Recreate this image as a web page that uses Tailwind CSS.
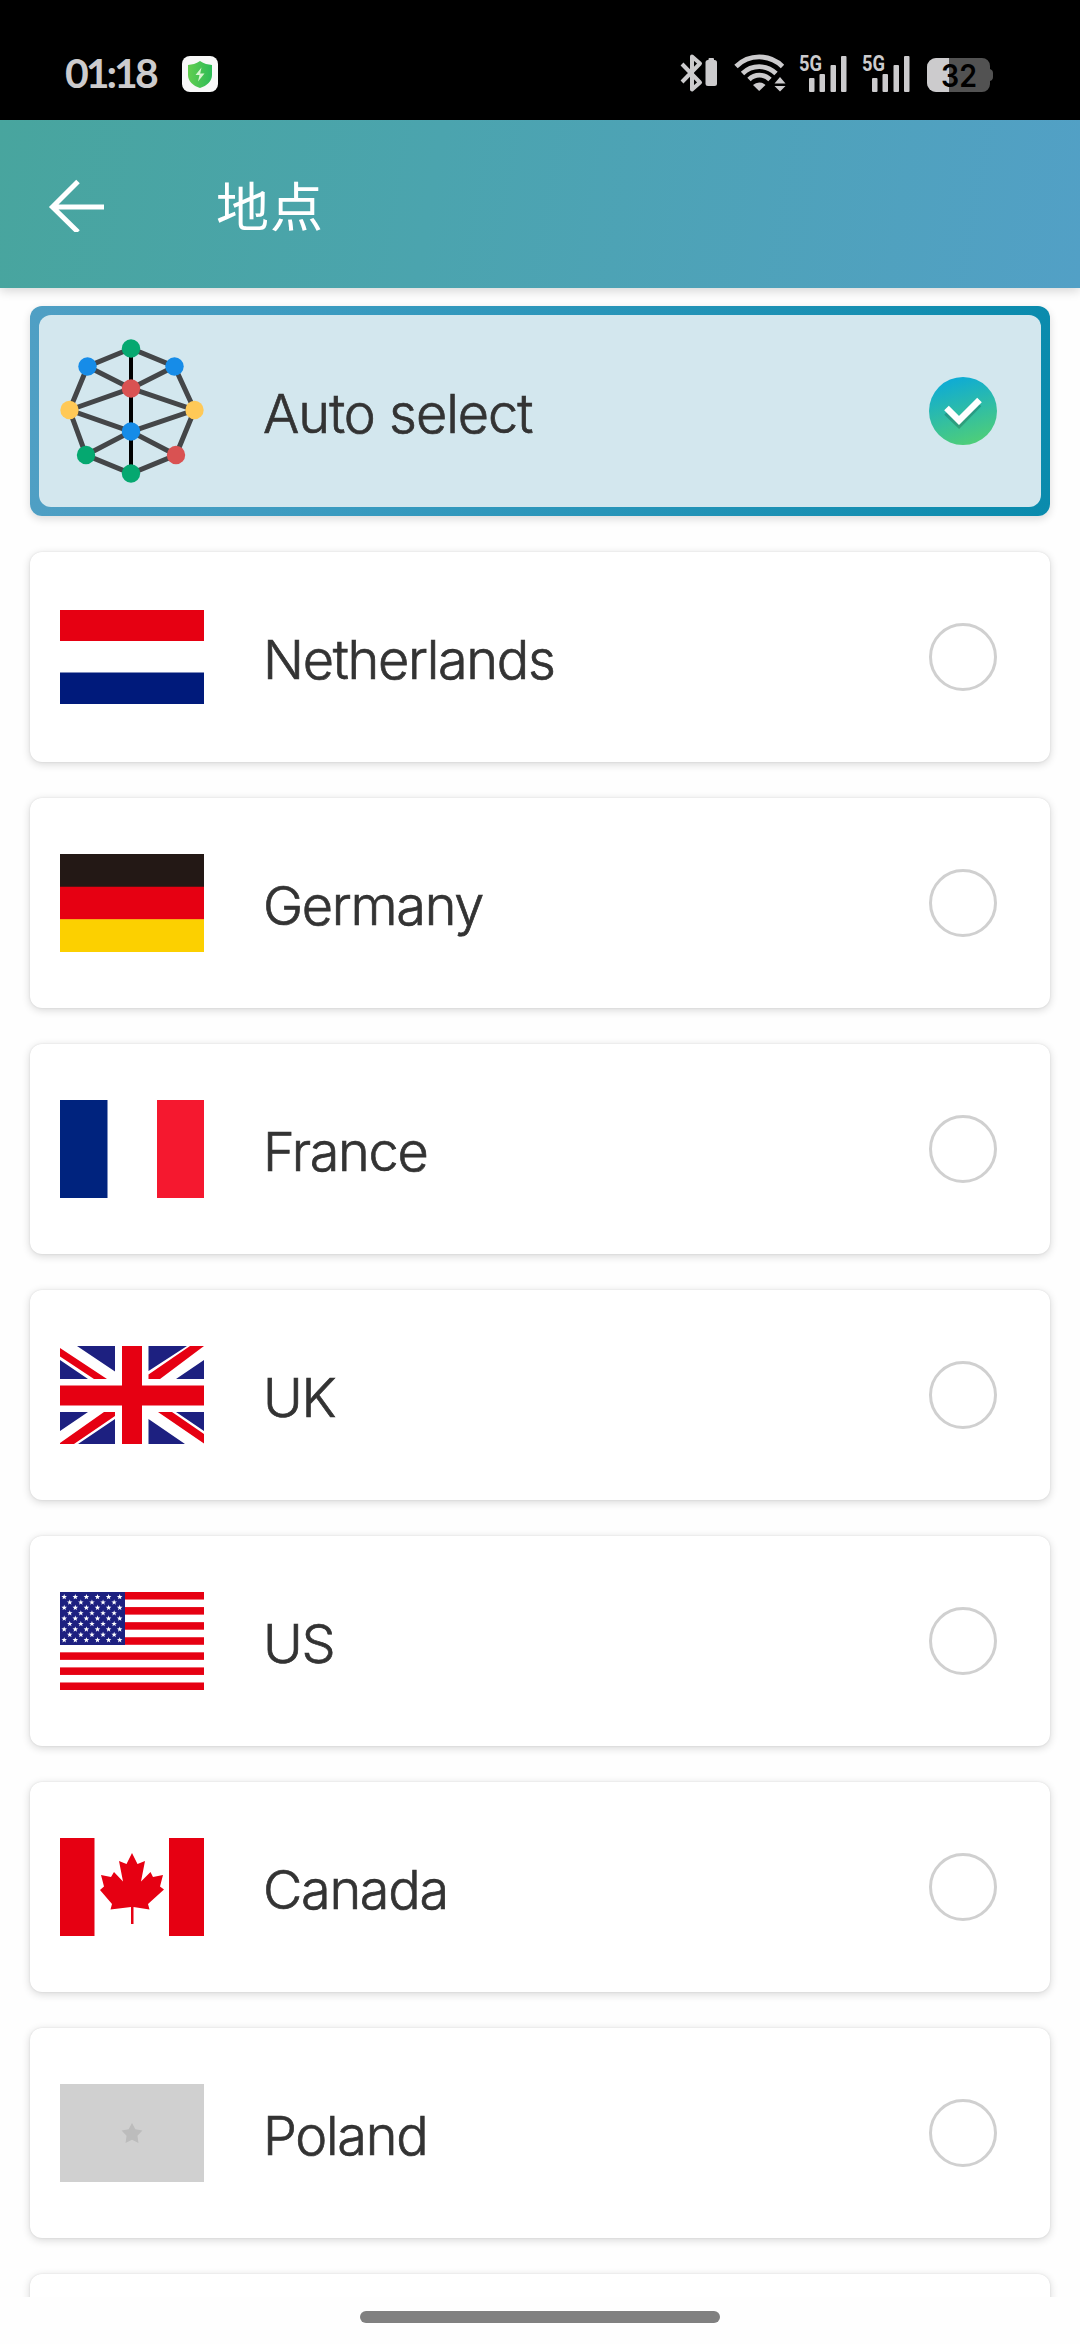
<!DOCTYPE html>
<html lang="zh">
<head>
<meta charset="utf-8">
<title>地点</title>
<script src="https://cdn.jsdelivr.net/npm/@tailwindcss/browser@4"></script>
</head>
<body class="w-[1080px] h-[2344px] overflow-hidden bg-[#fefefe] font-['Inter',sans-serif] flex flex-col">
  <div class="h-[120px] shrink-0 bg-black text-[#cccbcd] flex items-center pl-[65px] pr-[86px] pt-[28px]">
    <span class="font-['Lato'] font-bold text-[41px] leading-[40px] w-[92px] mb-[2px] tracking-[-3px] whitespace-nowrap">01:18</span>
    <svg class="ml-[25px]" width="36" height="36" viewBox="0 0 36 36"><defs><linearGradient id="sh"><stop offset="0" stop-color="#62ce50"/><stop offset="1" stop-color="#2dbb57"/></linearGradient></defs><rect width="36" height="36" rx="8" fill="#f8f8f8"/><path d="M18 5c4 3 8 3.500 12 4v10c0 6-5 11-12 13C11 30 6 25 6 19V9c4-.5 8-1 12-4z" fill="url(#sh)"/><path d="M19.500 11.500l-6 7.500h4l-1.500 6.500 6.500-8h-4.300z" fill="#d8f5d0"/></svg>
    <svg class="ml-auto" width="314" height="58" viewBox="0 -10 314 58" fill="#cccbcd">
      <path d="M2 9.500L20 28 12 35V2l8 7L2 27.500" fill="none" stroke="#cccbcd" stroke-width="4" stroke-linejoin="round" transform="translate(0,-.5)"/>
      <rect x="25.500" y="5" width="11.500" height="26" rx="2.500"/><rect x="28.500" y="3" width="5.500" height="4" rx="1"/>
      <g transform="translate(0,-1)"><g fill="none" stroke="#cccbcd" stroke-width="4.800"><path d="M56 12.500a33 33 0 0 1 46.500 0"/><path d="M62.500 19.500a24 24 0 0 1 33.500 0"/><path d="M69 25.500a15 15 0 0 1 21 0"/></g>
      <path d="M73 31a9 9 0 0 1 12.500 0L79.200 37z"/>
      <path d="M94.500 29.500h11l-5.500-6.500zM94.500 32h11l-5.500 5.500z"/></g>
      <g transform="translate(0,-1)"><rect x="129" y="24" width="5.500" height="14" rx="1"/><rect x="139.500" y="20" width="5.500" height="18" rx="1"/><rect x="150.500" y="11" width="5.500" height="27" rx="1"/><rect x="161" y="2" width="5.500" height="36" rx="1"/></g>
      <g transform="translate(63,-1)"><rect x="129" y="24" width="5.500" height="14" rx="1"/><rect x="139.500" y="20" width="5.500" height="18" rx="1"/><rect x="150.500" y="11" width="5.500" height="27" rx="1"/><rect x="161" y="2" width="5.500" height="36" rx="1"/></g>
      <text x="119" y="16" class="font-['Roboto'] font-bold text-[22px]" textLength="23" lengthAdjust="spacingAndGlyphs">5G</text>
      <text x="182" y="16" class="font-['Roboto'] font-bold text-[22px]" textLength="23" lengthAdjust="spacingAndGlyphs">5G</text>
      <g transform="translate(0,-1)"><path d="M256 4h46a8 8 0 0 1 8 8v3q3 1 3 4v4q0 3-3 4v3a8 8 0 0 1-8 8h-46a9 9 0 0 1-9-9V13a9 9 0 0 1 9-9z" fill="#525252"/>
      <path d="M269 4h-13a9 9 0 0 0-9 9v16a9 9 0 0 0 9 9h13z"/>
      <text x="261" y="32.500" fill="#000" class="font-['Inter'] font-semibold text-[31px]" textLength="36" lengthAdjust="spacingAndGlyphs">32</text></g>
    </svg>
  </div>
  <header class="h-[168px] shrink-0 bg-[linear-gradient(100deg,#48a59e,#4ba4ae_40%,#52a0c6)] flex items-center relative shadow-[0_3px_10px_rgba(0,0,0,0.16)]">
    <svg class="ml-[48px]" width="58" height="56" viewBox="0 0 58 56" fill="none" stroke="#fff" stroke-width="5"><path d="M56 31H4M30 5.500L4.500 31 30 56"/></svg>
    <h1 class="ml-[110px] mb-[1px] text-white text-[53px] leading-[60px] tracking-[1px] font-['Noto_Sans_CJK_SC',sans-serif]">地点</h1>
  </header>
  <main class="h-[2009px] shrink-0 overflow-hidden px-[30px] pt-[18px]">
    <div id="list" class="flex flex-col gap-[36px] text-[54px] leading-[64px] text-[#333] [-webkit-text-stroke:0.7px_#333]">
      <div class="h-[210px] shrink-0 rounded-[12px] p-[9px] bg-[linear-gradient(90deg,#4f9fc4,#3a9bc0_30%,#0a8bad)] shadow-[0_3px_8px_rgba(0,0,0,0.14)]">
        <div class="h-[192px] rounded-[12px] bg-[#d3e7ee] flex items-center pl-[21px] pr-[43px]">
          <svg width="144" height="154" viewBox="0 0 144 154"><g stroke="#444648" stroke-width="5" fill="none"><path d="M71 14.500L27.500 32.500 9.500 76 26 121 71 139.500 116 121 134.500 76 114.500 32.500zM27.500 32.500L71 54.500 114.500 32.500M9.500 76L71 54.500 134.500 76 71 97.500zM26 121L71 97.500 116 121"/><path d="M71 14v126" stroke="#000" stroke-width="4"/></g><g fill="#05a870"><circle cx="71" cy="14.500" r="9.200"/><circle cx="26" cy="121" r="9.200"/><circle cx="71" cy="139.500" r="9.200"/></g><g fill="#168ce8"><circle cx="27.500" cy="32.500" r="9.200"/><circle cx="114.500" cy="32.500" r="9.200"/><circle cx="71" cy="97.500" r="9.200"/></g><g fill="#d95252"><circle cx="71" cy="54.500" r="9.200"/><circle cx="116" cy="121" r="9.200"/></g><g fill="#ffc957"><circle cx="9.500" cy="76" r="9.200"/><circle cx="134.500" cy="76" r="9.200"/></g></svg>
          <span class="ml-[59px] mt-[6px] font-light tracking-[-1px]">Auto select</span>
          <svg class="ml-auto" width="70" height="70" viewBox="0 0 70 70"><defs><linearGradient id="ok" x1=".3" y1="0" x2=".6" y2="1"><stop offset="0" stop-color="#0caad8"/><stop offset="1" stop-color="#4fce78"/></linearGradient></defs><circle cx="35" cy="35" r="34" fill="url(#ok)"/><path d="M18.500 34.500L31 46.500 51 26" transform="translate(0,2)" stroke="#000" stroke-opacity=".18" stroke-width="6.500" fill="none"/><path d="M18.500 32L31 44.500 51.500 24" stroke="#fff" stroke-width="6.500" fill="none"/></svg>
        </div>
      </div>
    </div>
  </main>
  <footer class="grow flex justify-center pt-[14px]"><div class="w-[360px] h-[12px] rounded-full bg-[#808080]"></div></footer>
<script>
const star = (cx, cy, r, k = .42) => { let p = []; for (let i = 0; i < 10; i++) { const a = -Math.PI/2 + i*Math.PI/5, q = i%2 ? r*k : r; p.push((cx+q*Math.cos(a)).toFixed(2)+','+(cy+q*Math.sin(a)).toFixed(2)); } return `<polygon points="${p.join(' ')}"/>`; };
let us = '';
for (let i = 0; i < 7; i++) us += `<rect y="${i*15.08}" width="144" height="7.540" fill="#e60012"/>`;
us += '<rect width="65" height="53" fill="#1d2080"/><g fill="#fff">';
for (let r = 0; r < 9; r++) for (let c = 0; c < (r%2 ? 5 : 6); c++) us += star(4.200 + (r%2 ? 5.550 : 0) + c*11.100, 5 + r*5.380, 2.900);
us += '</g>';
const flags = [
 ['Netherlands', '<path fill="#e60012" d="M0 2h144v31H0z"/><path fill="#001a7b" d="M0 64.500h144V96H0z"/>'],
 ['Germany', '<path fill="#231815" d="M0 0h144v33H0z"/><path fill="#e60012" d="M0 32.700h144v33H0z"/><path fill="#fcd000" d="M0 65.300h144V98H0z"/>'],
 ['France', '<path fill="#00237e" d="M0 0h47.500v98H0z"/><path fill="#f5182f" d="M97 0h47v98H97z"/>'],
 ['UK', '<path fill="#1d2080" d="M17 0h38v25.500zM88.500 0h38.500L88.500 25zM144 14v19h-28zM0 14l28 19H0zM0 66h28L0 85zM55 73v25H18zM88.500 73L125 98H88.500zM116 66h28v19z"/><path fill="#e60012" d="M62 0h20v39.500h62v20H82V98H62V59.500H0v-20h62zM0 2l47 31H34L0 10.500zM130 0h14L100 33H88.500v-4.500zM55 66v4L14 98H0v-1l44-31zM98 66h14l32 22v9.500z"/>'],
 ['US', us],
 ['Canada', '<path fill="#e60012" d="M0 0h34.500v98H0zM109 0h35v98h-35zM72 15l5.500 11 7.500-3-4 20.500L90.500 34l2.500 5 10-2-3 11.500 4 3L88 66l1.500 5.500L73.500 69v17h-2.500V69L50.500 71.500 52 66 40 52l4-3.500L41 37l10 2 3-5 9 9.500L59 23l7.500 3z"/>'],
 ['Poland', '<rect width="144" height="98" fill="#d0d0d0"/><g fill="#bcbcbc">' + star(72, 50, 11, .52) + '</g>'],
 ['', '']
];
document.getElementById('list').insertAdjacentHTML('beforeend', flags.map(([n, f]) => `
  <div class="h-[210px] shrink-0 rounded-[12px] bg-white shadow-[0_2px_8px_rgba(0,0,0,0.16),0_0_2px_rgba(0,0,0,0.1)] flex items-center pl-[30px] pr-[53px]">
    ${n ? `<svg width="144" height="98" viewBox="0 0 144 98">${f}</svg>
    <span class="ml-[59px] mt-[6px] font-light tracking-[-1.3px]">${n}</span>
    <div class="ml-auto w-[68px] h-[68px] rounded-full border-[3px] border-[#d0d0d0]"></div>` : ''}
  </div>`).join(''));
</script>
</body>
</html>
